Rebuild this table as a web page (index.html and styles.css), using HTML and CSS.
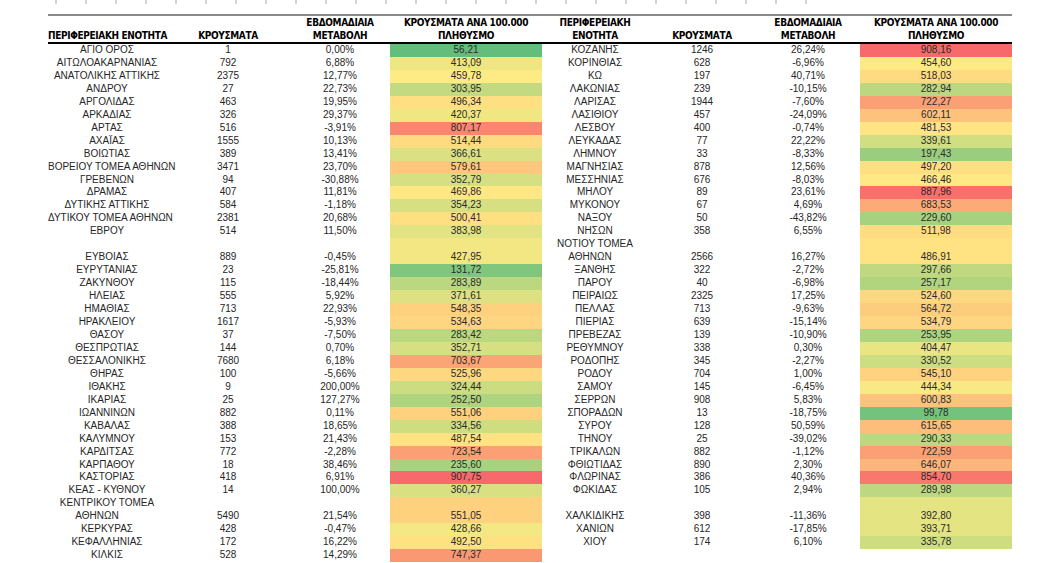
FILE: index.html
```html
<!DOCTYPE html>
<html lang="el">
<head>
<meta charset="utf-8">
<title>Κρούσματα ανά περιφερειακή ενότητα</title>
<link rel="stylesheet" href="styles.css">
</head>
<body>
<div class="page">
  <div class="ticks"></div>
  <table class="cases">
    <colgroup>
      <col class="c-name-l"><col class="c-num-l"><col class="c-pct-l"><col class="c-rate">
      <col class="c-name-r"><col class="c-num-r"><col class="c-pct-r"><col class="c-rate">
    </colgroup>
    <thead>
      <tr>
        <th>ΠΕΡΙΦΕΡΕΙΑΚΗ ΕΝΟΤΗΤΑ</th>
        <th>ΚΡΟΥΣΜΑΤΑ</th>
        <th>ΕΒΔΟΜΑΔΙΑΙΑ<br>ΜΕΤΑΒΟΛΗ</th>
        <th>ΚΡΟΥΣΜΑΤΑ ΑΝΑ 100.000<br>ΠΛΗΘΥΣΜΟ</th>
        <th>ΠΕΡΙΦΕΡΕΙΑΚΗ<br>ΕΝΟΤΗΤΑ</th>
        <th>ΚΡΟΥΣΜΑΤΑ</th>
        <th>ΕΒΔΟΜΑΔΙΑΙΑ<br>ΜΕΤΑΒΟΛΗ</th>
        <th>ΚΡΟΥΣΜΑΤΑ ΑΝΑ 100.000<br>ΠΛΗΘΥΣΜΟ</th>
      </tr>
    </thead>
    <tbody>
      <tr><td>ΑΓΙΟ ΟΡΟΣ</td><td>1</td><td>0,00%</td><td class="rate">56,21</td><td>ΚΟΖΑΝΗΣ</td><td>1246</td><td>26,24%</td><td class="rate">908,16</td></tr>
      <tr><td>ΑΙΤΩΛΟΑΚΑΡΝΑΝΙΑΣ</td><td>792</td><td>6,88%</td><td class="rate">413,09</td><td>ΚΟΡΙΝΘΙΑΣ</td><td>628</td><td>-6,96%</td><td class="rate">454,60</td></tr>
      <tr><td>ΑΝΑΤΟΛΙΚΗΣ ΑΤΤΙΚΗΣ</td><td>2375</td><td>12,77%</td><td class="rate">459,78</td><td>ΚΩ</td><td>197</td><td>40,71%</td><td class="rate">518,03</td></tr>
      <tr><td>ΑΝΔΡΟΥ</td><td>27</td><td>22,73%</td><td class="rate">303,95</td><td>ΛΑΚΩΝΙΑΣ</td><td>239</td><td>-10,15%</td><td class="rate">282,94</td></tr>
      <tr><td>ΑΡΓΟΛΙΔΑΣ</td><td>463</td><td>19,95%</td><td class="rate">496,34</td><td>ΛΑΡΙΣΑΣ</td><td>1944</td><td>-7,60%</td><td class="rate">722,27</td></tr>
      <tr><td>ΑΡΚΑΔΙΑΣ</td><td>326</td><td>29,37%</td><td class="rate">420,37</td><td>ΛΑΣΙΘΙΟΥ</td><td>457</td><td>-24,09%</td><td class="rate">602,11</td></tr>
      <tr><td>ΑΡΤΑΣ</td><td>516</td><td>-3,91%</td><td class="rate">807,17</td><td>ΛΕΣΒΟΥ</td><td>400</td><td>-0,74%</td><td class="rate">481,53</td></tr>
      <tr><td>ΑΧΑΪΑΣ</td><td>1555</td><td>10,13%</td><td class="rate">514,44</td><td>ΛΕΥΚΑΔΑΣ</td><td>77</td><td>22,22%</td><td class="rate">339,61</td></tr>
      <tr><td>ΒΟΙΩΤΙΑΣ</td><td>389</td><td>13,41%</td><td class="rate">366,61</td><td>ΛΗΜΝΟΥ</td><td>33</td><td>-8,33%</td><td class="rate">197,43</td></tr>
      <tr><td>ΒΟΡΕΙΟΥ ΤΟΜΕΑ ΑΘΗΝΩΝ</td><td>3471</td><td>23,70%</td><td class="rate">579,61</td><td>ΜΑΓΝΗΣΙΑΣ</td><td>878</td><td>12,56%</td><td class="rate">497,20</td></tr>
      <tr><td>ΓΡΕΒΕΝΩΝ</td><td>94</td><td>-30,88%</td><td class="rate">352,79</td><td>ΜΕΣΣΗΝΙΑΣ</td><td>676</td><td>-8,03%</td><td class="rate">466,46</td></tr>
      <tr><td>ΔΡΑΜΑΣ</td><td>407</td><td>11,81%</td><td class="rate">469,86</td><td>ΜΗΛΟΥ</td><td>89</td><td>23,61%</td><td class="rate">887,96</td></tr>
      <tr><td>ΔΥΤΙΚΗΣ ΑΤΤΙΚΗΣ</td><td>584</td><td>-1,18%</td><td class="rate">354,23</td><td>ΜΥΚΟΝΟΥ</td><td>67</td><td>4,69%</td><td class="rate">683,53</td></tr>
      <tr><td>ΔΥΤΙΚΟΥ ΤΟΜΕΑ ΑΘΗΝΩΝ</td><td>2381</td><td>20,68%</td><td class="rate">500,41</td><td>ΝΑΞΟΥ</td><td>50</td><td>-43,82%</td><td class="rate">229,60</td></tr>
      <tr><td>ΕΒΡΟΥ</td><td>514</td><td>11,50%</td><td class="rate">383,98</td><td>ΝΗΣΩΝ</td><td>358</td><td>6,55%</td><td class="rate">511,98</td></tr>
      <tr><td>ΕΥΒΟΙΑΣ</td><td>889</td><td>-0,45%</td><td class="rate">427,95</td><td>ΝΟΤΙΟΥ ΤΟΜΕΑ<br><span class="tail">ΑΘΗΝΩΝ</span></td><td>2566</td><td>16,27%</td><td class="rate">486,91</td></tr>
      <tr><td>ΕΥΡΥΤΑΝΙΑΣ</td><td>23</td><td>-25,81%</td><td class="rate">131,72</td><td>ΞΑΝΘΗΣ</td><td>322</td><td>-2,72%</td><td class="rate">297,66</td></tr>
      <tr><td>ΖΑΚΥΝΘΟΥ</td><td>115</td><td>-18,44%</td><td class="rate">283,89</td><td>ΠΑΡΟΥ</td><td>40</td><td>-6,98%</td><td class="rate">257,17</td></tr>
      <tr><td>ΗΛΕΙΑΣ</td><td>555</td><td>5,92%</td><td class="rate">371,61</td><td>ΠΕΙΡΑΙΩΣ</td><td>2325</td><td>17,25%</td><td class="rate">524,60</td></tr>
      <tr><td>ΗΜΑΘΙΑΣ</td><td>713</td><td>22,93%</td><td class="rate">548,35</td><td>ΠΕΛΛΑΣ</td><td>713</td><td>-9,63%</td><td class="rate">564,72</td></tr>
      <tr><td>ΗΡΑΚΛΕΙΟΥ</td><td>1617</td><td>-5,93%</td><td class="rate">534,63</td><td>ΠΙΕΡΙΑΣ</td><td>639</td><td>-15,14%</td><td class="rate">534,79</td></tr>
      <tr><td>ΘΑΣΟΥ</td><td>37</td><td>-7,50%</td><td class="rate">283,42</td><td>ΠΡΕΒΕΖΑΣ</td><td>139</td><td>-10,90%</td><td class="rate">253,95</td></tr>
      <tr><td>ΘΕΣΠΡΩΤΙΑΣ</td><td>144</td><td>0,70%</td><td class="rate">352,71</td><td>ΡΕΘΥΜΝΟΥ</td><td>338</td><td>0,30%</td><td class="rate">404,47</td></tr>
      <tr><td>ΘΕΣΣΑΛΟΝΙΚΗΣ</td><td>7680</td><td>6,18%</td><td class="rate">703,67</td><td>ΡΟΔΟΠΗΣ</td><td>345</td><td>-2,27%</td><td class="rate">330,52</td></tr>
      <tr><td>ΘΗΡΑΣ</td><td>100</td><td>-5,66%</td><td class="rate">525,96</td><td>ΡΟΔΟΥ</td><td>704</td><td>1,00%</td><td class="rate">545,10</td></tr>
      <tr><td>ΙΘΑΚΗΣ</td><td>9</td><td>200,00%</td><td class="rate">324,44</td><td>ΣΑΜΟΥ</td><td>145</td><td>-6,45%</td><td class="rate">444,34</td></tr>
      <tr><td>ΙΚΑΡΙΑΣ</td><td>25</td><td>127,27%</td><td class="rate">252,50</td><td>ΣΕΡΡΩΝ</td><td>908</td><td>5,83%</td><td class="rate">600,83</td></tr>
      <tr><td>ΙΩΑΝΝΙΝΩΝ</td><td>882</td><td>0,11%</td><td class="rate">551,06</td><td>ΣΠΟΡΑΔΩΝ</td><td>13</td><td>-18,75%</td><td class="rate">99,78</td></tr>
      <tr><td>ΚΑΒΑΛΑΣ</td><td>388</td><td>18,65%</td><td class="rate">334,56</td><td>ΣΥΡΟΥ</td><td>128</td><td>50,59%</td><td class="rate">615,65</td></tr>
      <tr><td>ΚΑΛΥΜΝΟΥ</td><td>153</td><td>21,43%</td><td class="rate">487,54</td><td>ΤΗΝΟΥ</td><td>25</td><td>-39,02%</td><td class="rate">290,33</td></tr>
      <tr><td>ΚΑΡΔΙΤΣΑΣ</td><td>772</td><td>-2,28%</td><td class="rate">723,54</td><td>ΤΡΙΚΑΛΩΝ</td><td>882</td><td>-1,12%</td><td class="rate">722,59</td></tr>
      <tr><td>ΚΑΡΠΑΘΟΥ</td><td>18</td><td>38,46%</td><td class="rate">235,60</td><td>ΦΘΙΩΤΙΔΑΣ</td><td>890</td><td>2,30%</td><td class="rate">646,07</td></tr>
      <tr><td>ΚΑΣΤΟΡΙΑΣ</td><td>418</td><td>6,91%</td><td class="rate">907,75</td><td>ΦΛΩΡΙΝΑΣ</td><td>386</td><td>40,36%</td><td class="rate">854,70</td></tr>
      <tr><td>ΚΕΑΣ - ΚΥΘΝΟΥ</td><td>14</td><td>100,00%</td><td class="rate">360,27</td><td>ΦΩΚΙΔΑΣ</td><td>105</td><td>2,94%</td><td class="rate">289,98</td></tr>
      <tr><td>ΚΕΝΤΡΙΚΟΥ ΤΟΜΕΑ<br><span class="tail tail-wide">ΑΘΗΝΩΝ</span></td><td>5490</td><td>21,54%</td><td class="rate">551,05</td><td>ΧΑΛΚΙΔΙΚΗΣ</td><td>398</td><td>-11,36%</td><td class="rate">392,80</td></tr>
      <tr><td>ΚΕΡΚΥΡΑΣ</td><td>428</td><td>-0,47%</td><td class="rate">428,66</td><td>ΧΑΝΙΩΝ</td><td>612</td><td>-17,85%</td><td class="rate">393,71</td></tr>
      <tr><td>ΚΕΦΑΛΛΗΝΙΑΣ</td><td>172</td><td>16,22%</td><td class="rate">492,50</td><td>ΧΙΟΥ</td><td>174</td><td>6,10%</td><td class="rate">335,78</td></tr>
      <tr><td>ΚΙΛΚΙΣ</td><td>528</td><td>14,29%</td><td class="rate">747,37</td><td></td><td></td><td></td><td class="rate"></td></tr>
    </tbody>
  </table>
</div>
<script src="script.js"></script>
</body>
</html>
```
FILE: styles.css
```css
html, body {
  margin: 0;
  padding: 0;
  background: #ffffff;
}

body {
  font-family: "Liberation Sans", Arial, "DejaVu Sans", sans-serif;
  color: #262626;
}

.page {
  padding-left: 48px;
}

.ticks {
  width: 775px;
  height: 4px;
  margin-left: 7px;
  margin-bottom: 10px;
  background: repeating-linear-gradient(90deg, #d4d4d4 0 2px, transparent 2px 30px);
}

.cases {
  border-collapse: collapse;
  table-layout: fixed;
  width: 964px;
  border-top: 2px solid #8a8a8a;
}

.c-name-l { width: 118px; }
.c-num-l  { width: 124px; }
.c-pct-l  { width: 100px; }
.c-rate   { width: 152px; }
.c-name-r { width: 106px; }
.c-num-r  { width: 108px; }
.c-pct-r  { width: 104px; }

.cases th {
  font-family: "Liberation Sans Narrow", "DejaVu Sans Condensed", "Liberation Sans", sans-serif;
  font-stretch: condensed;
  font-weight: bold;
  font-size: 10px;
  letter-spacing: -0.35px;
  line-height: 13px;
  color: #000;
  text-align: center;
  vertical-align: bottom;
  white-space: nowrap;
  padding: 0;
  height: 26px;
  border-bottom: 2px solid #000;
}

.cases td {
  font-size: 10px;
  height: 12.95px;
  line-height: 12.95px;
  padding: 0;
  text-align: center;
  vertical-align: bottom;
  white-space: nowrap;
  color: #262626;
}

.cases td.rate {
  color: #2a2a2a;
}

.tail {
  display: inline-block;
  margin-right: 10px;
}

.tail-wide {
  margin-right: 20px;
}
```
FILE: script.js
```js
(function () {
  var cells = Array.prototype.slice.call(document.querySelectorAll('td.rate'));
  var vals = [];
  cells.forEach(function (c) {
    var t = c.textContent.trim();
    if (t) vals.push(parseFloat(t.replace(',', '.')));
  });
  var sorted = vals.slice().sort(function (a, b) { return a - b; });
  var min = sorted[0], max = sorted[sorted.length - 1];
  var pos = (sorted.length - 1) * 0.5;
  var lo = Math.floor(pos), hi = Math.ceil(pos);
  var mid = sorted[lo] + (sorted[hi] - sorted[lo]) * (pos - lo);
  var g = [99, 190, 123], y = [255, 235, 132], r = [248, 105, 107];
  function mix(a, b, t) {
    return 'rgb(' + a.map(function (v, i) { return Math.round(v + (b[i] - v) * t); }).join(',') + ')';
  }
  cells.forEach(function (c) {
    var t = c.textContent.trim();
    if (!t) return;
    var v = parseFloat(t.replace(',', '.'));
    var col = v <= mid ? mix(g, y, (v - min) / (mid - min)) : mix(y, r, (v - mid) / (max - mid));
    c.style.backgroundColor = col;
  });
})();
```
